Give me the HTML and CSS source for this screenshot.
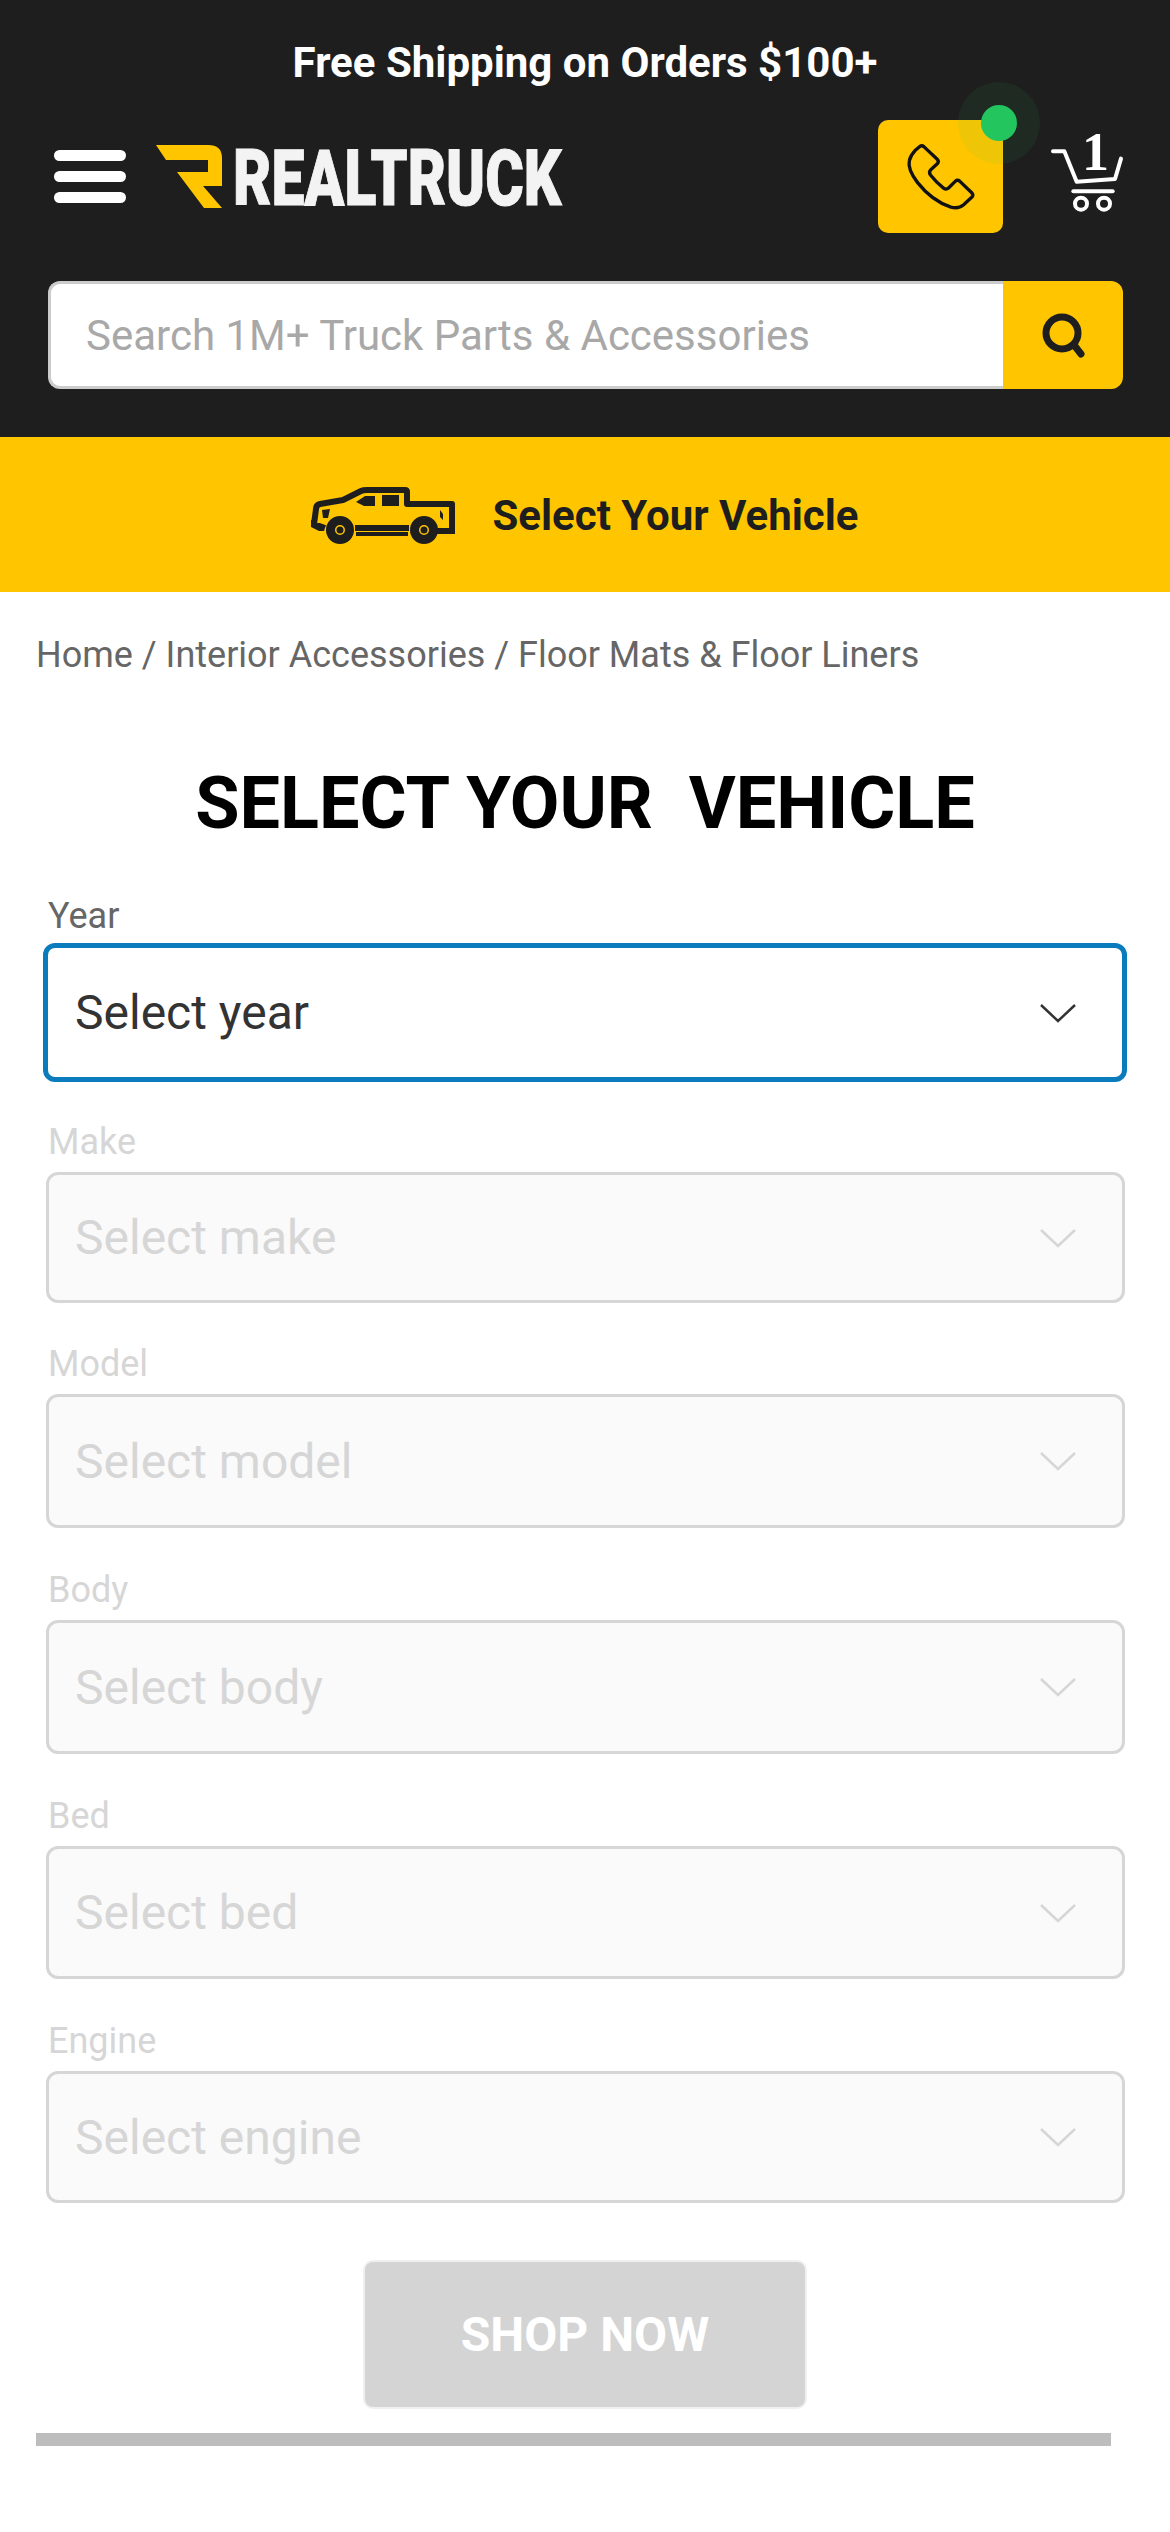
FILE: index.html
```html
<!DOCTYPE html>
<html lang="en">
<head>
<meta charset="utf-8">
<title>RealTruck - Select Your Vehicle</title>
<link rel="stylesheet" href="styles.css">
</head>
<body>
<header class="header">
  <p class="promo">Free Shipping on Orders $100+</p>
  <div class="nav">
    <button class="burger" aria-label="Menu"><i></i><i></i><i></i></button>
    <a class="logo" href="#">
      <svg class="logo-r" viewBox="0 0 66 63" width="66" height="63"><path fill="#ffc600" d="M0 0H52Q66 0 66 13V41H47L66 63H48L21 27H52V15H10Z"/></svg>
      <span class="logo-text"><span class="logo-word">REALTRUCK</span></span>
    </a>
    <div class="phone">
      <svg viewBox="315 275 215 208" width="72" height="70"><path fill="none" stroke="#111" stroke-width="10" stroke-linejoin="round" d="M360 287Q366 284 372 289L412 327Q417 333 412 339L392 357Q385 364 391 373Q410 397 430 412Q438 418 445 412L465 392Q472 386 479 392L515 427Q520 433 515 439L490 462Q475 475 452 469Q395 450 352 395Q322 355 328 330Q331 315 345 300Z"/></svg>
      <span class="halo"></span>
      <span class="dot"></span>
    </div>
    <div class="cart">
      <svg viewBox="750 255 222 225" width="74" height="75"><g fill="none" stroke="#fff" stroke-width="12" stroke-linecap="round" stroke-linejoin="round"><path d="M759 295H793L830 386L945 378L963 317"/><path d="M820 415H938"/><circle cx="843" cy="452" r="18"/><circle cx="912" cy="452" r="18"/></g></svg>
      <span class="cart-count">1</span>
    </div>
  </div>
  <form class="search">
    <div class="search-input">Search 1M+ Truck Parts &amp; Accessories</div>
    <button class="search-btn" type="button" aria-label="Search">
      <svg viewBox="0 0 48 48" width="48" height="48"><g fill="none" stroke="#1e1e1e" stroke-width="7" stroke-linecap="round"><circle cx="23" cy="22" r="16"/><path d="M35 34L42 43"/></g></svg>
    </button>
  </form>
</header>

<div class="vehicle-bar">
  <svg class="truck" viewBox="0 0 144 57" width="144" height="57">
    <g fill="none" stroke="#1e1e1e" stroke-width="6" stroke-linejoin="round">
      <path d="M3 37L5 22Q5 18 9 17L32 13L50 4Q52 3 56 3H94Q96 3 96 5V17H141V44H128M98 41H44M14 41L3 37"/>
    </g>
    <path fill="#1e1e1e" d="M45 15L54 9H64V19H53ZM71 8H88V19H71ZM11 23L19 22L17 31H12ZM129 23L132 27V33L129 30ZM45 45H97V49H45ZM0 33H6V40L14 44H8L0 40ZM126 41H144V47H126Z"/>
    <g fill="#ffc600" stroke="#1e1e1e" stroke-width="9">
      <circle cx="29" cy="43" r="9.500"/><circle cx="113" cy="43" r="9.500"/>
    </g>
    <circle cx="29" cy="43" r="3.500" fill="#1e1e1e"/><circle cx="113" cy="43" r="3.500" fill="#1e1e1e"/>
  </svg>
  <span class="vehicle-text">Select Your Vehicle</span>
</div>

<main class="main">
  <nav class="crumbs">Home / Interior Accessories / Floor Mats &amp; Floor Liners</nav>
  <h1 class="title">SELECT YOUR&nbsp; VEHICLE</h1>
  <form class="selector">
    <div class="field field-year">
      <label class="field-label">Year</label>
      <div class="select select-active"><span>Select year</span>
        <svg class="chev" viewBox="0 0 36 20" width="36" height="20"><path d="M1 2L18 18L35 2"/></svg></div>
    </div>
    <div class="field field-off field-make">
      <label class="field-label">Make</label>
      <div class="select"><span>Select make</span>
        <svg class="chev" viewBox="0 0 36 20" width="36" height="20"><path d="M1 2L18 18L35 2"/></svg></div>
    </div>
    <div class="field field-off field-model">
      <label class="field-label">Model</label>
      <div class="select"><span>Select model</span>
        <svg class="chev" viewBox="0 0 36 20" width="36" height="20"><path d="M1 2L18 18L35 2"/></svg></div>
    </div>
    <div class="field field-off field-body">
      <label class="field-label">Body</label>
      <div class="select"><span>Select body</span>
        <svg class="chev" viewBox="0 0 36 20" width="36" height="20"><path d="M1 2L18 18L35 2"/></svg></div>
    </div>
    <div class="field field-off field-bed">
      <label class="field-label">Bed</label>
      <div class="select"><span>Select bed</span>
        <svg class="chev" viewBox="0 0 36 20" width="36" height="20"><path d="M1 2L18 18L35 2"/></svg></div>
    </div>
    <div class="field field-off field-engine">
      <label class="field-label">Engine</label>
      <div class="select"><span>Select engine</span>
        <svg class="chev" viewBox="0 0 36 20" width="36" height="20"><path d="M1 2L18 18L35 2"/></svg></div>
    </div>
    <button class="shop" type="button">SHOP NOW</button>
  </form>
  <div class="rule"></div>
</main>
</body>
</html>
```
FILE: styles.css
```css
* { box-sizing: border-box; }
html, body { margin: 0; padding: 0; }
body { background: #fff; font-family: Roboto, "Liberation Sans", sans-serif; color: #333; }
button { font-family: inherit; border: 0; padding: 0; }

.header { background: #1e1e1e; height: 437px; padding-top: 37px; }
.promo { margin: 0; height: 83px; line-height: 52px; font-size: 42px; font-weight: 700; color: #fff; text-align: center; }

.nav { display: flex; align-items: center; height: 113px; padding: 0 46px 0 54px; }
.burger { display: flex; flex-direction: column; gap: 10px; width: 72px; background: none; margin-top: -1px; }
.burger i { display: block; height: 11px; border-radius: 6px; background: #fff; }
.logo { display: flex; align-items: center; margin-left: 30px; text-decoration: none; }
.logo-r { display: block; }
.logo-text { display: block; width: 329px; height: 56px; margin: 4px 0 0 11px; }
.logo-word { display: block; width: 440px; font-size: 78px; line-height: 56px; font-weight: 900; color: #f3f3f3; -webkit-text-stroke: 1px #f3f3f3; transform: scaleX(.755); transform-origin: left center; white-space: nowrap; }

.phone { position: relative; display: flex; align-items: center; justify-content: center; width: 125px; height: 113px; margin-left: auto; margin-right: 1px; background: #ffc600; border-radius: 10px; }
.halo { position: absolute; left: 80px; top: -38px; width: 82px; height: 82px; border-radius: 50%; background: rgba(34, 197, 94, .08); }
.dot { position: absolute; left: 103px; top: -15px; width: 36px; height: 36px; border-radius: 50%; background: #22c55e; }

.cart { position: relative; width: 74px; height: 75px; margin-left: 46px; margin-top: -3px; }
.cart svg { display: block; }
.cart-count { position: absolute; left: 32px; top: -16px; font-family: "Liberation Serif", serif; font-weight: 700; font-size: 54px; line-height: 60px; color: #fff; }

.search { display: flex; height: 108px; margin: 48px 47px 0 48px; }
.search-input { flex: 1; display: flex; align-items: center; padding-left: 35px; background: #fff; border: 3px solid #ccc; border-right: 0; border-radius: 12px 0 0 12px; font-size: 42px; color: #a8a8a8; }
.search-btn { display: flex; align-items: center; justify-content: center; width: 120px; background: #ffc600; border-radius: 0 12px 12px 0; }

.vehicle-bar { display: flex; align-items: center; justify-content: center; gap: 37px; height: 155px; background: #ffc600; }
.truck { display: block; margin-top: 1px; }
.vehicle-text { font-size: 42px; font-weight: 700; color: #1e1e1e; padding-top: 2px; }

.main { padding: 0 0 60px; }
.crumbs { padding: 39px 36px 0; line-height: 48px; font-size: 36px; color: #666; }
.title { margin: 77px 0 0; height: 96px; line-height: 96px; font-size: 72px; font-weight: 700; color: #000; text-align: center; }

.selector { display: flex; flex-direction: column; align-items: stretch; padding: 42px 43px 0; }
.field { margin-top: 40px; }
.field-year { margin-top: 0; }
.field-make { margin-top: 38px; }
.field-model { margin-top: 39px; }
.field-label { display: block; height: 44px; margin-bottom: 8px; padding-left: 5px; line-height: 44px; font-size: 36px; color: #666; }
.select { display: flex; align-items: center; justify-content: space-between; height: 133px; margin: 0 2px 0 3px; padding: 0 46px 0 26px; background: #fafafa; border: 3px solid #d6d6d6; border-radius: 12px; font-size: 48px; color: #d6d6d6; }
.field-make .select { height: 131px; }
.field-model .select, .field-body .select { height: 134px; }
.field-engine .select { height: 132px; }
.field-year .field-label { margin-bottom: 5px; }
.select-active { height: 139px; margin: 0; padding: 0 46px 0 27px; background: #fff; border: 5px solid #0a7bbd; color: #333; }
.chev { display: block; fill: none; stroke: #333; stroke-width: 2.5; }
.field-off .field-label { color: #d6d6d6; }
.field-off .chev { stroke: #d6d6d6; }

.shop { align-self: center; width: 440px; height: 145px; margin-top: 59px; background: #d4d4d4; border-radius: 8px; box-shadow: 0 0 0 2px #f0f0f0; font-size: 48px; font-weight: 700; color: #fff; }
.rule { width: 1075px; height: 13px; margin: 26px 0 0 36px; background: #bdbdbd; }
```
